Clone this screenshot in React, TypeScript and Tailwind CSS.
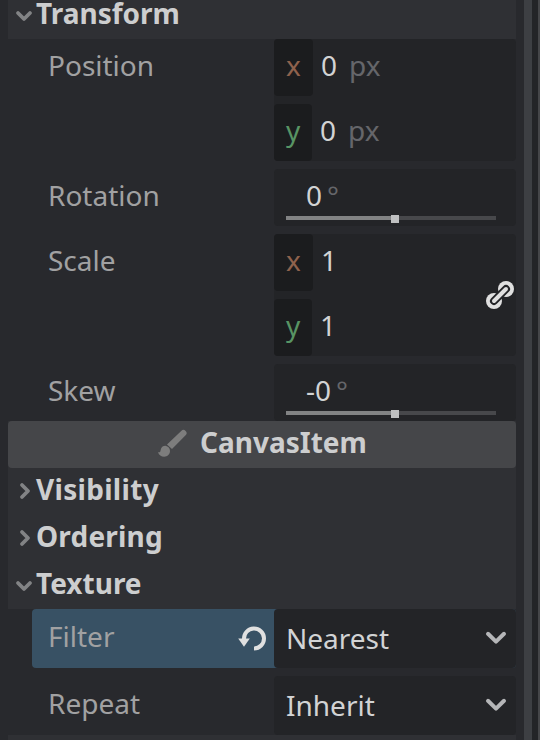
import type { ReactNode } from "react";

function Chevron({ open }: { open?: boolean }) {
  return (
    <svg width="24" height="24" viewBox="0 0 24 24" fill="none" stroke="#828385" strokeWidth="3.8" strokeLinecap="round" strokeLinejoin="round" className="shrink-0">
      {open ? <path d="M6 9l6 6 6-6" /> : <path d="M10 5l6 6-6 6" />}
    </svg>
  );
}

function Section({ title, open, tracking = "" }: { title: string; open?: boolean; tracking?: string }) {
  return (
    <div className="ml-2 flex h-[47px] w-[508px] shrink-0 items-start bg-[#2f3034] pl-1 font-bold text-[#cdcecf]">
      <div className="pt-3">
        <Chevron open={open} />
      </div>
      <span className={`mt-2 leading-[26px] ${tracking}`}>{title}</span>
    </div>
  );
}

function Row({ label, children }: { label: string; children: ReactNode }) {
  return (
    <div className="mb-2 flex shrink-0">
      <div className="w-[274px] pt-[7px] pl-12 text-[#a1a1a2]">{label}</div>
      {children}
    </div>
  );
}

function Axis({ axis, value, unit }: { axis: "x" | "y"; value: string; unit?: string }) {
  const isX = axis === "x";
  return (
    <div className="flex h-[57px]">
      <div className={`h-[57px] rounded-[4px] bg-[#1b1c1e] pt-[7px] pl-3 ${isX ? "w-[39px] text-[#8f624d]" : "w-[38px] text-[#589464]"}`}>{axis}</div>
      <span className="w-9 pt-[7px] pl-2">{value}</span>
      {unit && <span className="pt-[7px] text-[#65666a]">{unit}</span>}
    </div>
  );
}

function Vector({ value, unit, children }: { value: string; unit?: string; children?: ReactNode }) {
  return (
    <div className="relative flex w-[242px] flex-col gap-2 rounded-[4px] bg-[#232427]">
      <Axis axis="x" value={value} unit={unit} />
      <Axis axis="y" value={value} unit={unit} />
      {children}
    </div>
  );
}

function Slider({ value }: { value: string }) {
  return (
    <div className="h-[57px] w-[242px] rounded-[4px] bg-[#232427] px-3 pt-[7px]">
      <div className="h-[38px] pl-5">
        {value}
        <span className="ml-[5px] text-[#65666a]">°</span>
      </div>
      <div className="flex h-[9px] w-[210px] items-start">
        <div className="mt-0.5 h-1 w-[105px] bg-[#828384]" />
        <div className="mt-px h-2 w-2 bg-[#bfc0c1]" />
        <div className="mt-0.5 h-1 w-[97px] bg-[#47484b]" />
      </div>
    </div>
  );
}

function Select({ value }: { value: string }) {
  return (
    <div className="flex h-[59px] w-[242px] justify-between rounded-[4px] bg-[#232427] pt-2.5 pr-2 pl-3">
      <span>{value}</span>
      <svg width="24" height="24" viewBox="0 0 24 24" fill="none" stroke="#b5b6b8" strokeWidth="4" strokeLinecap="round" strokeLinejoin="round" className="mt-[7px]">
        <path d="M4 7.8l8 7.8 8-7.8" />
      </svg>
    </div>
  );
}

export default function App() {
  return (
    <div className="flex h-[740px] w-[540px] overflow-hidden bg-[#28292d] font-['Noto_Sans',sans-serif] text-[28px] leading-[38px] whitespace-nowrap text-[#d2d3d4]">
      <div className="-mt-2 flex w-[516px] shrink-0 flex-col">
        <Section title="Transform" open />
        <Row label="Position">
          <Vector value="0" unit="px" />
        </Row>
        <Row label="Rotation">
          <Slider value="0" />
        </Row>
        <Row label="Scale">
          <Vector value="1">
            <svg width="32" height="32" viewBox="0 0 32 32" fill="none" strokeLinecap="round" className="absolute top-[45px] right-0">
              <circle cx="22" cy="10" r="8" fill="#e0e0e0" />
              <circle cx="10" cy="22" r="8" fill="#e0e0e0" />
              <path d="M10 22L22 10" stroke="#232427" strokeWidth="8" />
              <path d="M10 22L22 10" stroke="#e0e0e0" strokeWidth="4" />
            </svg>
          </Vector>
        </Row>
        <div className="-mb-2">
          <Row label="Skew">
            <Slider value="-0" />
          </Row>
        </div>
        <div className="ml-2 flex h-[47px] w-[508px] shrink-0 items-start bg-[#2f3034]">
          <div className="flex h-[47px] w-[508px] rounded-[4px] bg-[#454649] pt-0.5 pl-[148px] font-bold text-[#cdcecf]">
            <svg width="32" height="32" viewBox="0 0 32 32" className="mt-1 mr-3 shrink-0" fill="#7d7d7d">
              <path d="M25.2 3.9a3.1 3.1 0 0 1 4.4 4.4L16 22l-5-4.6z" />
              <path d="M9.5 18.8c2.8.5 4.5 2.4 4.5 5.2 0 3.3-2.5 5.7-5.8 5.7-3 0-5.2-1.7-6.2-4.5 1.6.4 2.3-.1 2.6-2 .5-2.9 2.3-4.4 4.9-4.4z" />
            </svg>
            <span>CanvasItem</span>
          </div>
        </div>
        <Section title="Visibility" tracking="tracking-[0.3px]" />
        <Section title="Ordering" tracking="tracking-[0.2px]" />
        <Section title="Texture" open />
        <div className="mb-2 flex shrink-0 pl-8">
          <div className="flex w-[484px] rounded-[4px] bg-[#385164]">
            <div className="flex w-[242px] justify-between pt-2 pr-1.5 pl-4 text-[#a1a1a2]">
              <span>Filter</span>
              <svg width="32" height="32" viewBox="0 0 32 32" fill="none" className="mt-1.5">
                <path d="M8 16A10 10 0 1 1 18 25.5" stroke="#e0e0e0" strokeWidth="4" />
                <path d="M2.2 15.6h11.6L8 23.8z" fill="#e0e0e0" />
              </svg>
            </div>
            <Select value="Nearest" />
          </div>
        </div>
        <div className="flex shrink-0">
          <div className="w-[274px] pt-2 pl-12 text-[#a1a1a2]">Repeat</div>
          <Select value="Inherit" />
        </div>
        <div className="ml-2 h-[13px] w-[508px] bg-[#2f3034]" />
      </div>
      <div className="ml-2 w-2 shrink-0 bg-[#3d3f43]" />
      <div className="w-1.5 shrink-0 bg-[#232427]" />
      <div className="w-0.5 shrink-0 bg-[#454649]" />
    </div>
  );
}
